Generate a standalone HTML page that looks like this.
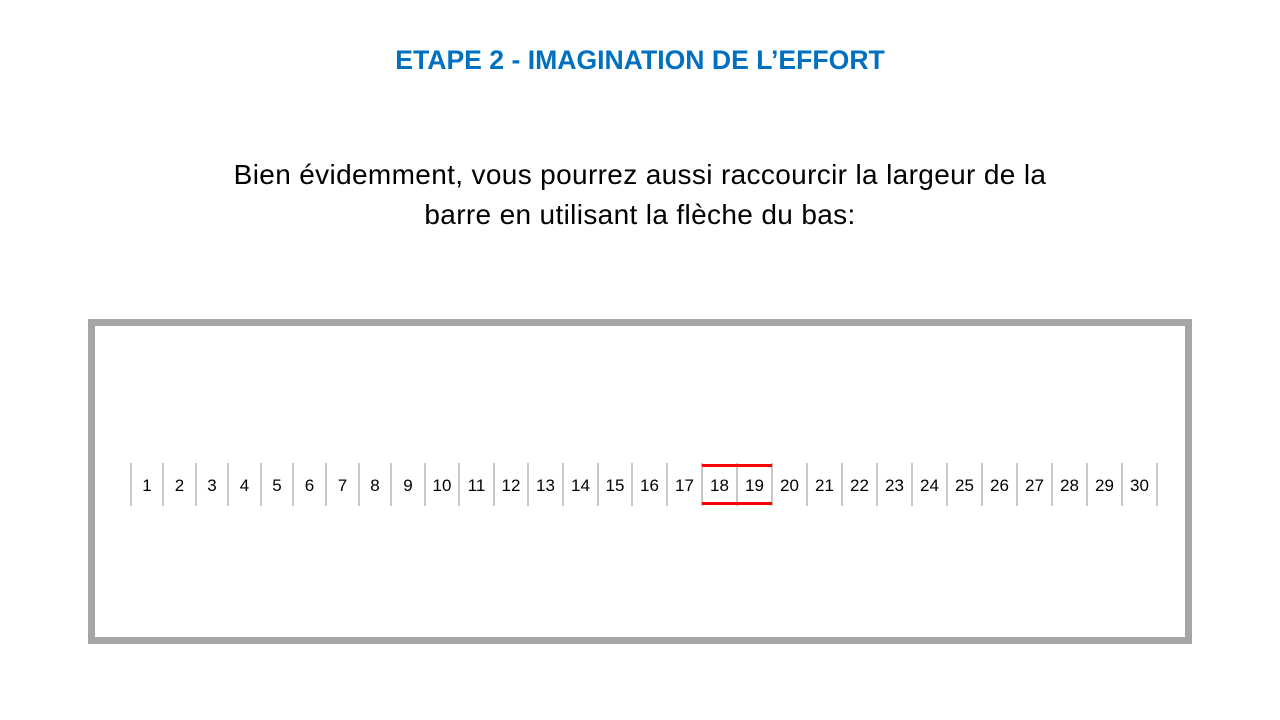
<!DOCTYPE html>
<html><head><meta charset="utf-8"><style>
body{margin:0;width:1280px;height:720px;background:#fff;position:relative;overflow:hidden;font-family:"Liberation Sans","DejaVu Sans",sans-serif}
.t{position:absolute;left:0;width:1280px;text-align:center;top:45px;font-size:26.6px;font-weight:bold;color:#0070c0}
.b{position:absolute;left:0;width:1280px;text-align:center;top:155px;font-size:28px;letter-spacing:0.35px;line-height:40px;color:#000}
.f{position:absolute;left:88px;top:319px;width:1090px;height:311px;border:7px solid #a6a6a6}
.tk{position:absolute;top:463px;width:2px;height:43px;background:#c8c8c8}
.n{position:absolute;top:476px;font-size:17px;text-align:center;color:#000}
.r{position:absolute;left:702px;width:70px;height:3px;background:#f00}
</style></head><body>
<div class="t">ETAPE 2 - IMAGINATION DE L’EFFORT</div>
<div class="b">Bien évidemment, vous pourrez aussi raccourcir la largeur de la<br>barre en utilisant la flèche du bas:</div>
<div class="f"></div>
<div id="s"></div>
<div class="r" style="top:464px"></div><div class="r" style="top:502px"></div>
<script>
var x=[131,163,196,228,261,293,326,359,391,425,459,494,528,563,598,632,667,702,737,772,807,842,877,912,947,982,1017,1052,1087,1122,1157],h='';
for(var i=0;i<x.length;i++){h+='<div class="tk" style="left:'+(x[i]-1)+'px"></div>';if(i<30)h+='<div class="n" style="left:'+x[i]+'px;width:'+(x[i+1]-x[i])+'px">'+(i+1)+'</div>';}
document.getElementById('s').innerHTML=h;
</script>
</body></html>
